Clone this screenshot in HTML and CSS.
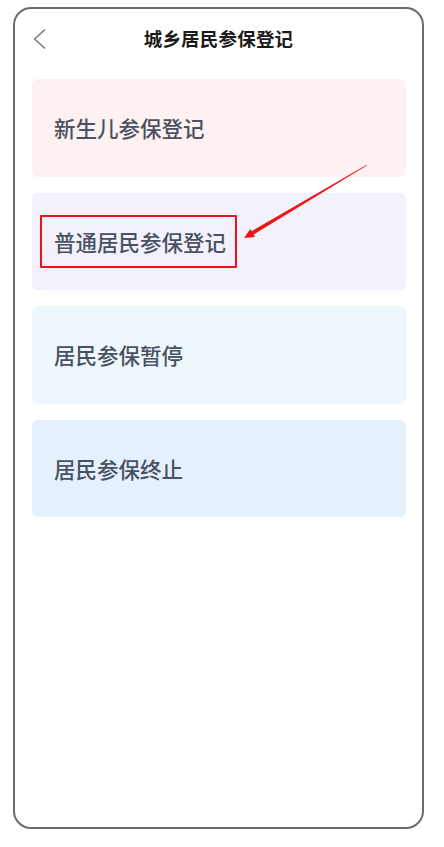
FILE: index.html
```html
<!DOCTYPE html>
<html lang="zh-CN">
<head>
<meta charset="utf-8">
<title>城乡居民参保登记</title>
<link rel="stylesheet" href="styles.css">
</head>
<body>
<div class="phone">
  <header class="topbar">
    <span class="back">
      <svg width="13" height="20" viewBox="0 0 13 20"><polyline points="11.5,1 1.5,10 11.5,19" fill="none" stroke="#7a7a7a" stroke-width="1.6" stroke-linecap="round" stroke-linejoin="round"/></svg>
    </span>
    <h1 class="title">城乡居民参保登记</h1>
    <span class="spacer"></span>
  </header>
  <main class="list">
    <div class="card card-pink"><span class="label">新生儿参保登记</span></div>
    <div class="card card-violet"><span class="label marked">普通居民参保登记</span></div>
    <div class="card card-cyan"><span class="label">居民参保暂停</span></div>
    <div class="card card-blue"><span class="label">居民参保终止</span></div>
  </main>
</div>
<svg class="arrow" viewBox="0 0 444 847" width="444" height="847">
  <polygon fill="#f01414" points="367.2,165.3 253.6,234.6 254.9,237.0 244,238 250.3,229.0 251.6,231.2 366.8,164.7"/>
</svg>
</body>
</html>
```
FILE: styles.css
```css
* { box-sizing: border-box; }
html, body { margin: 0; padding: 0; background: #fff; }
body {
  width: 444px;
  height: 847px;
  position: relative;
  overflow: hidden;
  font-family: "Noto Sans CJK SC", "Noto Sans", sans-serif;
}
.phone {
  margin: 7px 0 0 13px;
  width: 411px;
  height: 822px;
  border: 2px solid #6c6c6c;
  border-radius: 18px;
  background: #fff;
  display: flex;
  flex-direction: column;
}
.topbar {
  height: 58px;
  display: grid;
  grid-template-columns: 1fr auto 1fr;
  align-items: center;
}
.back {
  display: flex;
  align-items: center;
  padding-left: 18px;
  padding-top: 1px;
}
.title {
  margin: 0;
  font-size: 18.5px;
  font-weight: 700;
  color: #1b1b1b;
  letter-spacing: 0.2px;
}
.list {
  padding: 12px 16px 0 17px;
  display: flex;
  flex-direction: column;
  gap: 16px;
}
.card {
  height: 97.5px;
  border-radius: 6px;
  display: flex;
  align-items: center;
  padding-left: 22px;
}
.card-pink { background: #fdf1f1; }
.card-violet { background: #f3f1fc; }
.card-cyan { background: #eef7fb; }
.card-blue { background: #e4f1fd; }
.label {
  font-size: 21.5px;
  font-weight: 500;
  line-height: 1;
  color: #4a5162;
  position: relative;
}
.marked::after {
  content: "";
  position: absolute;
  left: -14px;
  right: -11px;
  top: -16px;
  bottom: -16px;
  border: 2px solid #e8141b;
  border-radius: 1px;
}
.arrow {
  position: absolute;
  left: 0;
  top: 0;
  pointer-events: none;
}
```
